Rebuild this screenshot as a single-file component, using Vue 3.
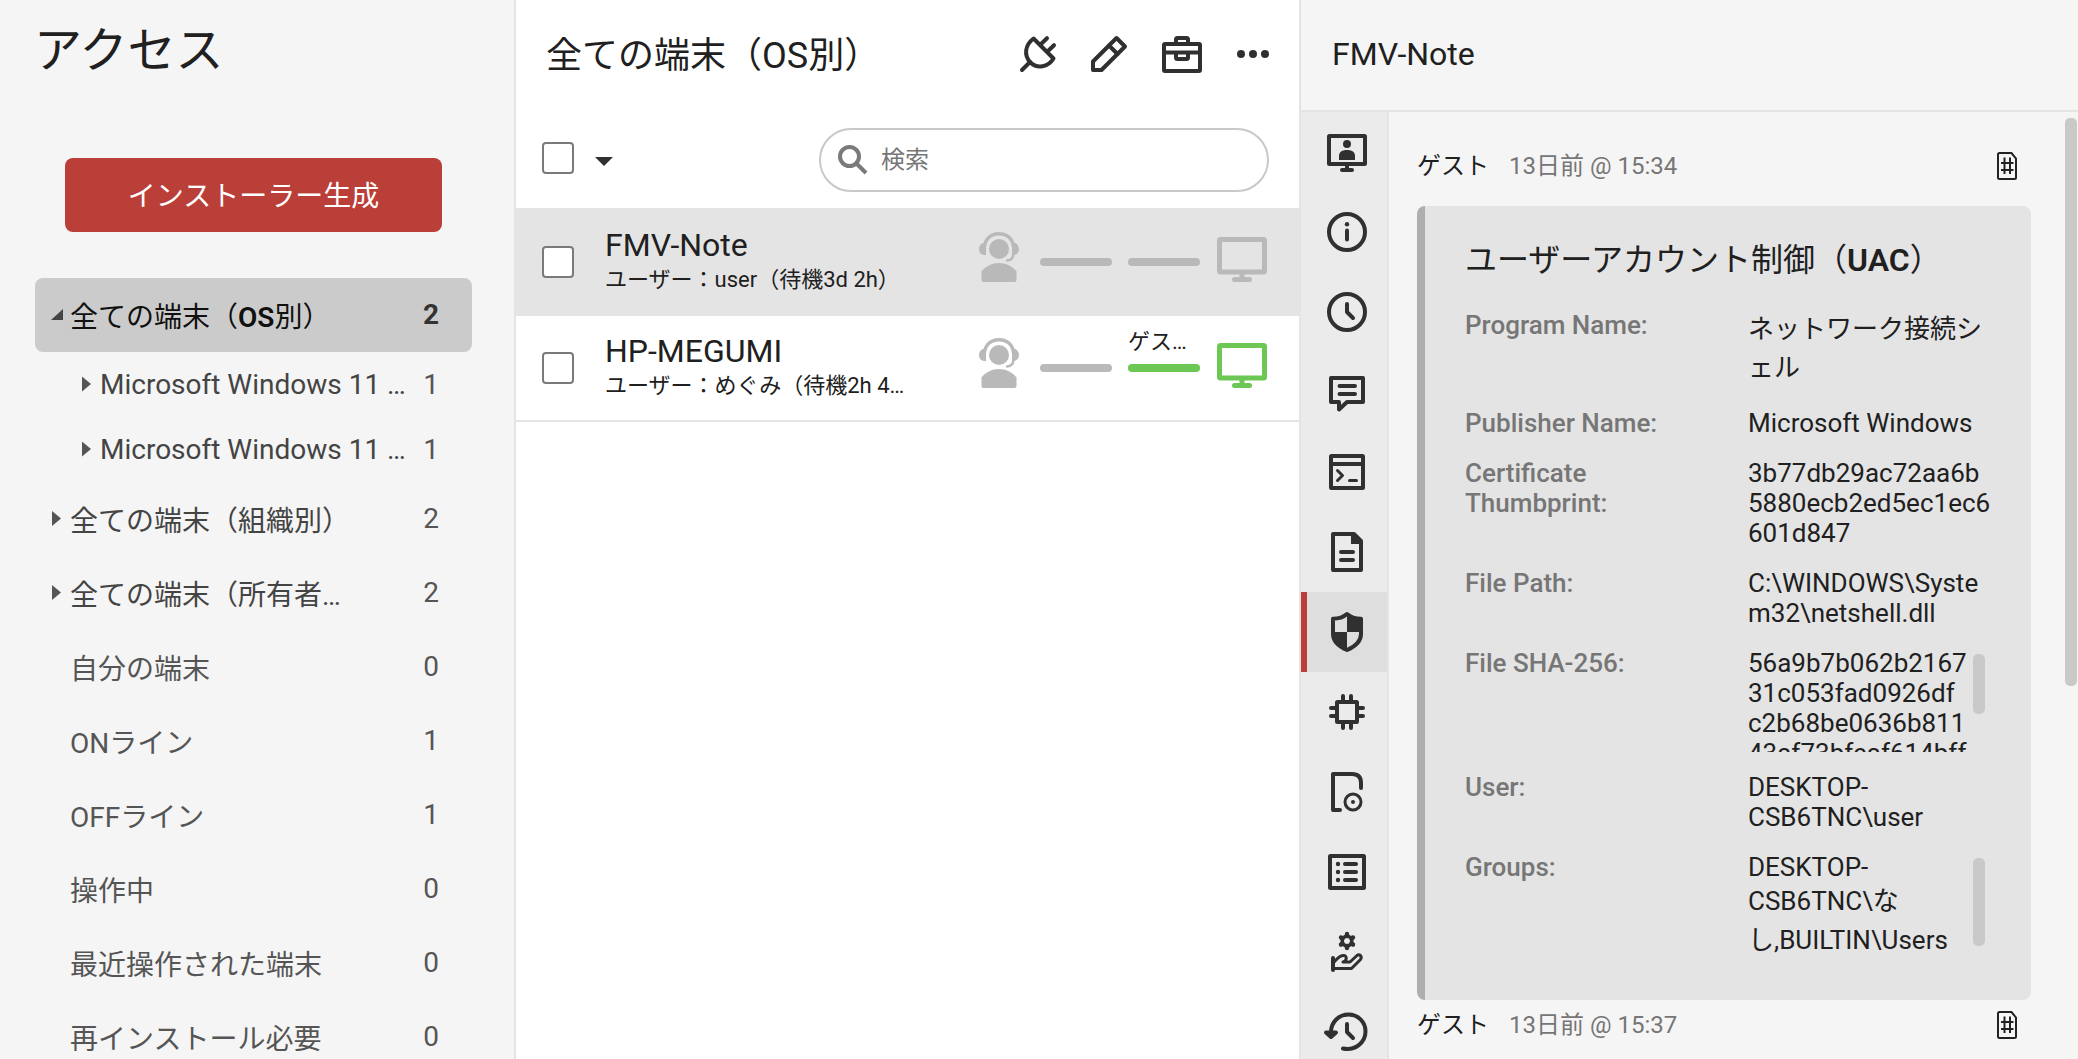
<template>
  <div class="app">
    <aside class="sidebar">
      <h1 class="sidebar-title">アクセス</h1>
      <button class="build-btn" type="button">インストーラー生成</button>

      <ul class="tree">
        <li v-for="(group, i) in groups" :key="i">
          <button
            class="tree-item"
            type="button"
            :class="{
              'tree-item--active': i === activeGroup,
              'tree-item--child': group.child,
              'tree-item--plain': !group.arrow,
            }"
            @click="activeGroup = i"
          >
            <span class="tree-arrow" :class="group.arrow && `tree-arrow--${group.arrow}`"></span>
            <span class="tree-label">{{ group.pre }}<b v-if="group.latin">{{ group.latin }}</b>{{ group.post }}</span>
            <span class="tree-count">{{ group.count }}</span>
          </button>
        </li>
      </ul>
    </aside>

    <main class="list">
      <header class="list-header">
        <h2 class="list-title">全ての端末（OS別）</h2>
        <div class="actions">
          <button v-for="a in actions" :key="a.label" class="icon-btn" type="button" :aria-label="a.label">
            <svg class="line-icon" :width="a.w" :height="a.h" :viewBox="`0 0 ${a.w} ${a.h}`" v-html="a.body"></svg>
          </button>
        </div>
      </header>

      <div class="toolbar">
        <div class="select-all">
          <input v-model="allChecked" class="check" type="checkbox" aria-label="全て選択" />
          <button class="icon-btn select-caret" type="button" aria-label="選択メニュー">
            <svg width="18" height="9" viewBox="0 0 18 9"><path d="M0 0H18L9 9Z" fill="#303030" /></svg>
          </button>
        </div>
        <label class="search">
          <svg width="30" height="30" viewBox="0 0 30 30" fill="none" stroke="#7a7a7a" stroke-width="4">
            <circle cx="11.5" cy="11.5" r="9.5" />
            <path d="M18.5 18.5L28 28" />
          </svg>
          <input v-model="query" class="search-input" type="text" placeholder="検索" aria-label="検索" />
        </label>
      </div>

      <ul class="devices">
        <li
          v-for="(d, i) in devices"
          :key="d.name"
          class="device"
          :class="{ 'device--active': i === activeDevice }"
          @click="activeDevice = i"
        >
          <input v-model="d.checked" class="check" type="checkbox" :aria-label="d.name" @click.stop />
          <div class="device-text">
            <div class="device-name">{{ d.name }}</div>
            <div class="device-user">{{ d.user }}</div>
          </div>
          <div class="status">
            <svg class="status-host" width="40" height="50" viewBox="0 0 40 50">
              <circle cx="20" cy="17" r="10" fill="currentColor" />
              <path d="M5.5 15C6 7 12 1.7 20 1.7S34 7 34.5 15" fill="none" stroke="currentColor" stroke-width="3.4" />
              <path d="M7 11V23H5.5C2 23 0 20 0 17S2 11.5 4 11ZM33 11V23H34.5C38 23 40 20 40 17S38 11.5 36 11Z" fill="currentColor" />
              <path d="M34.5 21C34.5 26 32 28.3 28 28.5" fill="none" stroke="currentColor" stroke-width="2.4" stroke-linecap="round" />
              <path d="M4.5 50Q2.5 50 2.5 48V39.5C7 34 13 31 20 31S33 34 37.5 39.5V48Q37.5 50 35.5 50Z" fill="currentColor" />
            </svg>
            <div class="link"><span class="link-bar"></span></div>
            <div class="link" :class="{ 'is-online': d.online }">
              <span v-if="d.guest" class="link-label">{{ d.guest }}</span>
              <span class="link-bar"></span>
            </div>
            <svg class="status-guest" :class="{ 'is-online': d.online }" width="50" height="45" viewBox="0 0 50 45">
              <rect x="2.5" y="2.5" width="45" height="32.5" rx="1" fill="none" stroke="currentColor" stroke-width="5" />
              <path d="M22.5 36H27.5V41H22.5Z" fill="currentColor" />
              <rect x="15" y="40" width="20" height="5" rx="2.5" fill="currentColor" />
            </svg>
          </div>
        </li>
      </ul>
    </main>

    <section class="detail">
      <header class="detail-header">
        <h2 class="detail-title">FMV-Note</h2>
      </header>
      <div class="detail-body">
        <nav class="rail">
          <button
            v-for="(tab, i) in tabs"
            :key="tab.label"
            class="rail-tab"
            type="button"
            :class="{ 'rail-tab--active': i === activeTab }"
            :aria-label="tab.label"
            @click="activeTab = i"
          >
            <svg class="line-icon" :width="tab.w" :height="tab.h" :viewBox="`0 0 ${tab.w} ${tab.h}`" v-html="tab.body"></svg>
          </button>
        </nav>

        <div class="feed">
          <article v-for="entry in entries" :key="entry.time">
            <div class="entry-head">
              <span class="entry-who">ゲスト</span>
              <span class="entry-time">{{ entry.time }}</span>
              <button class="icon-btn entry-hash" type="button" aria-label="ハッシュ">
                <svg width="20" height="28" viewBox="0 0 20 28" fill="none" stroke="#222" stroke-width="2">
                  <path d="M2.5 1H14.5L19 6.5V25.5Q19 27 17.5 27H2.5Q1 27 1 25.5V2.5Q1 1 2.5 1Z" />
                  <path d="M7.5 5.5V22M13 5.5V22M4 11H16.5M4 18H16.5" />
                </svg>
              </button>
            </div>

            <div v-if="entry.fields" class="card">
              <h3 class="card-title">ユーザーアカウント制御（<b>UAC</b>）</h3>
              <dl class="fields">
                <template v-for="f in entry.fields" :key="f.label">
                  <dt>{{ f.label }}</dt>
                  <dd :class="{ 'is-scroll': f.thumb }">
                    <span v-for="(part, k) in f.value" :key="k" :class="{ ja: part.ja }">{{ part.text }}</span>
                    <i v-if="f.thumb" class="thumb" :style="{ height: f.thumb + 'px' }"></i>
                  </dd>
                </template>
              </dl>
            </div>
          </article>
          <i class="feed-thumb"></i>
        </div>
      </div>
    </section>
  </div>
</template>

<script setup>
import { ref } from 'vue'

const activeGroup = ref(0)
const activeDevice = ref(0)
const activeTab = ref(6)
const allChecked = ref(false)
const query = ref('')

const groups = [
  { pre: '全ての端末（', latin: 'OS', post: '別）', count: 2, arrow: 'open' },
  { pre: 'Microsoft Windows 11 …', count: 1, arrow: 'closed', child: true },
  { pre: 'Microsoft Windows 11 …', count: 1, arrow: 'closed', child: true },
  { pre: '全ての端末（組織別）', count: 2, arrow: 'closed' },
  { pre: '全ての端末（所有者…', count: 2, arrow: 'closed' },
  { pre: '自分の端末', count: 0 },
  { pre: 'ONライン', count: 1 },
  { pre: 'OFFライン', count: 1 },
  { pre: '操作中', count: 0 },
  { pre: '最近操作された端末', count: 0 },
  { pre: '再インストール必要', count: 0 },
]

const devices = ref([
  { name: 'FMV-Note', user: 'ユーザー：user（待機3d 2h）', online: false, guest: '', checked: false },
  { name: 'HP-MEGUMI', user: 'ユーザー：めぐみ（待機2h 4…', online: true, guest: 'ゲス…', checked: false },
])

const actions = [
  {
    label: '接続', w: 36, h: 36,
    body: '<path d="M13.5 2.5L33.5 22.5C28 31.5 17 33 10.5 26.5C3.5 19.5 5 9 13.5 2.5Z"/><path d="M2 34L10 26M20.5 8.5L27 2.2M27.5 15.5L34 9.2"/>',
  },
  {
    label: '編集', w: 36, h: 36,
    body: '<path d="M2 34V25.5L25.5 2L34 10.5L10.5 34Z"/><path d="M18 9.5L26.5 18"/>',
  },
  {
    label: 'ツールボックス', w: 40, h: 38,
    body: '<rect x="2" y="9" width="36" height="27" rx="1"/><path d="M14 9V4.5Q14 3 15.5 3H24.5Q26 3 26 4.5V9M2 17.5H38M14 18V22.5Q14 24 15.5 24H24.5Q26 24 26 22.5V18"/>',
  },
  {
    label: 'その他', w: 32, h: 8,
    body: '<g fill="currentColor" stroke="none"><circle cx="4" cy="4" r="4"/><circle cx="16" cy="4" r="4"/><circle cx="28" cy="4" r="4"/></g>',
  },
]

const tabs = [
  {
    label: '画面', w: 40, h: 38,
    body: '<rect x="2" y="3" width="36" height="28" rx="0.5"/><path d="M20 32V37M15 37H25"/><g fill="currentColor" stroke="none"><circle cx="20" cy="11" r="4"/><path d="M12 27V23C12 19 15 17 20 17S28 19 28 23V27Z"/></g>',
  },
  {
    label: '情報', w: 40, h: 40,
    body: '<circle cx="20" cy="20" r="18"/><path d="M20 18.5V27.5"/><circle cx="20" cy="12.3" r="2.2" fill="currentColor" stroke="none"/>',
  },
  {
    label: '時間', w: 40, h: 40,
    body: '<circle cx="20" cy="20" r="18"/><path d="M20 12V20L26 26"/>',
  },
  {
    label: 'チャット', w: 36, h: 40,
    body: '<path d="M2 6H34V30H18L10 37.5V30H2Z"/><path d="M10.5 14H26M10.5 22H26"/>',
  },
  {
    label: 'コマンド', w: 36, h: 36,
    body: '<rect x="2" y="2" width="32" height="32" rx="0.5"/><path d="M2 10H34"/><path d="M8.5 16.5L13.5 21.5L8.5 26.5M20.5 26.5H27.5" stroke-width="3"/>',
  },
  {
    label: 'メモ', w: 32, h: 40,
    body: '<path d="M2 2H23L30 9V38H2Z"/><path d="M20 1H24L31 8V12H20Z" fill="currentColor" stroke="none"/><path d="M10 20H22M10 28H22"/>',
  },
  {
    label: 'アクセス権', w: 32, h: 40,
    body: '<path d="M16 2C12 5.5 8 6.7 2 6.7V22C2 30 9 35 16 38C23 35 30 30 30 22V6.7C24 6.7 20 5.5 16 2Z"/><path d="M16 2C20 5.5 24 6.7 30 6.7V20H16ZM16 20V38C9 35 2 30 2 22V20Z" fill="currentColor" stroke="none"/>',
  },
  {
    label: 'プロセス', w: 36, h: 36,
    body: '<rect x="8" y="8" width="20" height="20" rx="0.5"/><path d="M14 2V8M22 2V8M14 28V34M22 28V34M2 14H8M2 22H8M28 14H34M28 22H34"/>',
  },
  {
    label: 'ソフトウェア', w: 32, h: 40,
    body: '<path d="M9 38H2V2H21C27 2 30 5 30 11V16"/><circle cx="22" cy="30" r="8" stroke-width="3"/><circle cx="22" cy="30" r="2" fill="currentColor" stroke="none"/>',
  },
  {
    label: 'イベント', w: 38, h: 36,
    body: '<rect x="2" y="2" width="34" height="32" rx="0.5"/><path d="M17 10H28M17 18H28M17 26H28"/><g fill="currentColor" stroke="none"><circle cx="10" cy="10" r="2.2"/><circle cx="10" cy="18" r="2.2"/><circle cx="10" cy="26" r="2.2"/></g>',
  },
  {
    label: 'サポート', w: 32, h: 40,
    body: '<circle cx="16" cy="9" r="4.8" stroke-width="3.6"/><path d="M16 2V4M16 14V16M10 5.5L11.5 6.4M20.500 11.600L22 12.500M10 12.500L11.500 11.600M20.500 6.400L22 5.500" stroke-width="4.4"/><g stroke-width="3"><path d="M2 26V38" stroke-width="4"/><path d="M2 36.5H20.5L29.5 27.5C31.5 24.5 28.5 21.5 26 23.5L19 30H12C16 29 16.5 23.5 12.5 23.5C8.5 23.5 6 27 3 30"/></g>',
  },
  {
    label: '履歴', w: 46, h: 40,
    body: '<path d="M19 36.5C31 39 41.5 30.5 41.5 19.5C41.5 10 34 2.5 24.5 2.5C15 2.5 7 10 7 20V23"/><path d="M2 20.5L7 25L12 20.5Z" fill="currentColor"/><path d="M23 12V20L29 26"/>',
  },
]

const entries = [
  {
    time: '13日前 @ 15:34',
    fields: [
      { label: 'Program Name:', value: [{ text: 'ネットワーク接続シェル', ja: true }] },
      { label: 'Publisher Name:', value: [{ text: 'Microsoft Windows' }] },
      { label: 'Certificate Thumbprint:', value: [{ text: '3b77db29ac72aa6b5880ecb2ed5ec1ec6601d847' }] },
      { label: 'File Path:', value: [{ text: 'C:\\WINDOWS\\System32\\netshell.dll' }] },
      { label: 'File SHA-256:', value: [{ text: '56a9b7b062b216731c053fad0926dfc2b68be0636b81143af73bfeaf614bff' }], thumb: 60 },
      { label: 'User:', value: [{ text: 'DESKTOP-CSB6TNC\\user' }] },
      {
        label: 'Groups:',
        value: [{ text: 'DESKTOP-CSB6TNC\\' }, { text: 'なし', ja: true }, { text: ',BUILTIN\\Users' }],
        thumb: 88,
      },
    ],
  },
  { time: '13日前 @ 15:37' },
]
</script>

<style>
body {
  margin: 0;
}
</style>

<style scoped>
.app {
  display: grid;
  grid-template-columns: 516px minmax(0, 785fr) minmax(0, 777fr);
  height: 100vh;
  overflow: hidden;
  background: #fff;
  color: #202020;
  font-family: Roboto, 'Noto Sans CJK JP', sans-serif;
  font-size: 26px;
}

.app *,
.app *::before {
  box-sizing: border-box;
}

h1, h2, h3, ul, dl, dd {
  margin: 0;
  padding: 0;
  font-weight: 400;
  list-style: none;
}

b {
  font-weight: 600;
}

button {
  border: 0;
  background: none;
  padding: 0;
  color: inherit;
  font: inherit;
  cursor: pointer;
}

svg {
  display: block;
  flex: none;
}

.icon-btn {
  display: flex;
}

.line-icon {
  color: #303030;
  fill: none;
  stroke: currentColor;
  stroke-width: 4;
  stroke-linecap: round;
  stroke-linejoin: round;
  overflow: visible;
}

/* sidebar */
.sidebar {
  background: #f5f5f5;
  border-right: 2px solid #e4e4e4;
  overflow: hidden;
}

.sidebar-title {
  padding-left: 34px;
  font-size: 48px;
  line-height: 102px;
}

.build-btn {
  display: block;
  width: calc(100% - 137px);
  height: 74px;
  margin: 56px 72px 0 65px;
  padding-bottom: 2px;
  border-radius: 8px;
  background: #ba3f38;
  color: #fff;
  font-size: 28px;
}

.tree {
  margin: 46px 42px 0 35px;
}

.tree-item {
  display: flex;
  align-items: center;
  width: 100%;
  height: 74px;
  padding: 0 33px 1px 16px;
  border-radius: 8px;
  color: #444;
  font-size: 28px;
  text-align: left;
}

.tree-item--child {
  height: 65px;
  padding-left: 46px;
}

.tree-item--plain {
  color: #555;
}

.tree-item--active {
  background: #cbcbcb;
  color: #101010;
}

.tree-item--active .tree-count {
  color: #333;
  font-weight: 700;
}

.tree-arrow {
  flex: none;
  width: 19px;
}

.tree-arrow::before {
  content: '';
  display: block;
}

.tree-arrow--closed::before {
  width: 9px;
  height: 15px;
  margin-left: 1px;
  background: #555;
  clip-path: polygon(0 0, 100% 50%, 0 100%);
}

.tree-arrow--open::before {
  width: 12px;
  height: 11px;
  background: #444;
  clip-path: polygon(100% 0, 100% 100%, 0 100%);
}

.tree-label {
  flex: 1;
  white-space: nowrap;
}

.tree-count {
  color: #555;
}

/* device list */
.list {
  border-right: 2px solid #e4e4e4;
}

.list-header {
  display: flex;
  align-items: center;
  justify-content: space-between;
  height: 108px;
  padding: 0 30px;
}

.list-title {
  padding-bottom: 4px;
  font-size: 36px;
  white-space: nowrap;
}

.actions {
  display: flex;
  align-items: center;
  gap: 35px;
}

.toolbar {
  display: flex;
  align-items: flex-start;
  justify-content: space-between;
  padding: 20px 30px 16px 26px;
}

.select-all {
  display: flex;
  align-items: center;
  gap: 21px;
  height: 60px;
}

.select-caret {
  padding-top: 6px;
}

.check {
  appearance: none;
  flex: none;
  width: 32px;
  height: 32px;
  margin: 0;
  border: 2px solid #7a7a7a;
  border-radius: 4px;
  background: #fff;
}

.check:checked {
  background: #7a7a7a;
  box-shadow: inset 0 0 0 5px #fff;
}

.search {
  display: flex;
  align-items: center;
  gap: 13px;
  width: 450px;
  height: 64px;
  padding: 0 17px;
  border: 2px solid #c8c8c8;
  border-radius: 32px;
}

.search-input {
  flex: 1;
  min-width: 0;
  padding: 0;
  border: 0;
  outline: none;
  background: none;
  color: #202020;
  font: inherit;
  font-size: 24px;
}

.search-input::placeholder {
  color: #767676;
}

.devices {
  border-top: 2px solid #e4e4e4;
}

.device {
  display: flex;
  align-items: center;
  height: 106px;
  padding: 0 32px 0 26px;
  border-bottom: 2px solid #e4e4e4;
}

.device--active {
  background: #e4e4e4;
}

.device-text {
  flex: 1;
  min-width: 0;
  margin-left: 31px;
  padding-bottom: 2px;
  white-space: nowrap;
}

.device-name {
  font-size: 32px;
  line-height: 38px;
}

.device-user {
  font-size: 22px;
  line-height: 32px;
}

.status {
  display: flex;
  align-items: flex-end;
  height: 60px;
  margin-top: 10px;
  padding-bottom: 15px;
  color: #b9b9b9;
}

.link {
  display: flex;
  flex-direction: column;
  gap: 10px;
  width: 72px;
  margin: 0 0 16px 16px;
}

.status-host + .link {
  margin-left: 21px;
}

.status-guest {
  margin-left: 17px;
}

.link-label {
  color: #202020;
  font-size: 22px;
  line-height: 24px;
  white-space: nowrap;
}

.link-bar {
  height: 8px;
  border-radius: 4px;
  background: currentColor;
}

.is-online {
  color: #6dc755;
}

/* detail */
.detail {
  display: flex;
  flex-direction: column;
  min-height: 0;
  background: #f5f5f5;
}

.detail-header {
  display: flex;
  flex: none;
  align-items: center;
  height: 112px;
  padding: 0 31px 2px;
  border-bottom: 2px solid #e4e4e4;
}

.detail-title {
  font-size: 32px;
}

.detail-body {
  display: flex;
  flex: 1;
  min-height: 0;
}

.rail {
  flex: none;
  width: 88px;
  overflow: hidden;
  background: #ebebeb;
  border-right: 2px solid #e4e4e4;
}

.rail-tab {
  display: flex;
  align-items: center;
  justify-content: center;
  width: 100%;
  height: 80px;
  border-left: 6px solid transparent;
}

.rail-tab--active {
  border-left-color: #ba3f38;
  background: #dedede;
}

.feed {
  position: relative;
  flex: 1;
  min-width: 0;
  overflow: hidden;
  padding: 29px 47px 0 28px;
}

.feed-thumb,
.thumb {
  position: absolute;
  width: 12px;
  border-radius: 5px;
  background: #c9c9c9;
}

.feed-thumb {
  top: 6px;
  right: 1px;
  height: 60%;
}

.entry-head {
  display: flex;
  align-items: center;
  gap: 20px;
  height: 50px;
  font-size: 24px;
}

.entry-who,
.entry-time {
  padding-bottom: 5px;
}

.entry-time {
  color: #767676;
}

.entry-hash {
  margin: 0 14px 0 auto;
}

.card {
  margin-top: 15px;
  padding: 30px 40px 44px;
  border-left: 8px solid #aeaeae;
  border-radius: 8px;
  background: #e4e4e4;
}

.card-title {
  font-size: 32px;
  line-height: 48px;
}

.fields {
  display: grid;
  grid-template-columns: 1fr 1fr;
  gap: 20px 40px;
  margin-top: 26px;
  font-size: 26px;
  line-height: 30px;
}

dt {
  color: #767676;
  font-weight: 500;
}

dd {
  position: relative;
  min-width: 0;
  overflow-wrap: anywhere;
}

dd.is-scroll {
  max-height: 104px;
  padding-right: 24px;
  overflow: hidden;
}

.ja {
  line-height: 39px;
}

.thumb {
  top: 6px;
  right: 6px;
}
</style>
